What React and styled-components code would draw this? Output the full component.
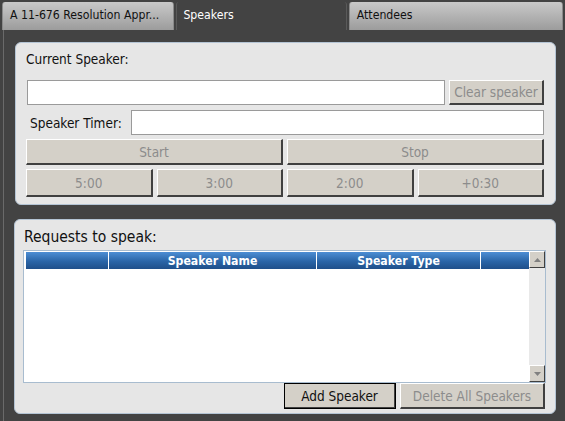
import React from 'react';
import styled, { createGlobalStyle } from 'styled-components';

const Global = createGlobalStyle`
  html, body { margin: 0; padding: 0; background: #434343; }
  body { font-family: "DejaVu Sans Condensed", "DejaVu Sans", sans-serif; font-size: 13.5px; }
`;

const Page = styled.div`
  width: 565px;
  height: 421px;
  background: #434343;
  overflow: hidden;
`;

const TabBar = styled.div`
  display: flex;
  height: 30px;
  padding: 2px 2px 0 2px;
  box-sizing: border-box;
  gap: 2px;
`;

const Tab = styled.div`
  width: ${p => p.w}px;
  box-sizing: border-box;
  padding: 6px 0 0 ${p => (p.active ? 6 : 7)}px;
  font-size: 12.2px;
  white-space: nowrap;
  color: ${p => (p.active ? '#ffffff' : '#111111')};
  background: ${p => (p.active ? '#434343' : 'linear-gradient(#c9c9c9, #9c9c9c)')};
  border-top-left-radius: 3px;
  border-top-right-radius: 3px;
  border-left: 1px solid ${p => (p.active ? '#5a5a5a' : '#8a8a8a')};
  border-right: 1px solid ${p => (p.active ? '#5a5a5a' : '#8a8a8a')};
`;

const Body = styled.div`
  margin-left: 3px;
  border-left: 1px solid #6a6a6a;
  height: 391px;
  padding: 12px 9px 0 10px;
  box-sizing: border-box;
  display: flex;
  flex-direction: column;
  gap: 14px;
`;

const Panel = styled.div`
  background: #e6e6e6;
  border: 1px solid #b4c4d4;
  border-radius: 6px;
  box-sizing: border-box;
  height: ${p => p.h}px;
  margin: ${p => p.m || '0'};
  padding: ${p => p.pad};
  display: flex;
  flex-direction: column;
`;

const Label = styled.div`
  color: #111;
  font-size: ${p => p.size || 13.5}px;
  white-space: nowrap;
  padding-left: ${p => p.indent || 0}px;
`;

const Row = styled.div`
  display: grid;
  grid-template-columns: ${p => p.cols};
  justify-content: ${p => p.justify || 'stretch'};
  gap: 4px;
  align-items: center;
  margin-top: ${p => p.mt || 0}px;
  margin-right: ${p => p.mr || 0}px;
  height: ${p => p.h}px;
`;

const Field = styled.div`
  height: 100%;
  margin-left: ${p => p.offset || 0}px;
  background: #fff;
  border: 1px solid #9a9a9a;
  box-sizing: border-box;
`;

const Button = styled.div`
  height: 100%;
  box-sizing: border-box;
  background: #d4d0c8;
  border-top: 1px solid #ffffff;
  border-left: 1px solid #ffffff;
  border-right: 2px solid #404040;
  border-bottom: 2px solid #404040;
  color: ${p => (p.enabled ? '#111' : '#8c8c8c')};
  display: flex;
  align-items: center;
  justify-content: center;
  font-size: 13.5px;
  white-space: nowrap;
  ${p => p.focused && 'outline: 1px solid #000; outline-offset: -1px;'}
`;

const Grid = styled.div`
  margin-top: 4px;
  height: 133px;
  border: 1px solid #a8bccf;
  background: #fff;
  display: flex;
  box-sizing: border-box;
  padding: 1px 0 1px 2px;
`;

const GridMain = styled.div`
  flex: 1;
`;

const Header = styled.div`
  display: grid;
  grid-template-columns: 82px 208px 164px 1fr;
  height: 17px;
  background: linear-gradient(#4d8ed4, #2a65a7 55%, #1f4f8a);
`;

const HeadCell = styled.div`
  color: #fff;
  font-size: 12.2px;
  font-weight: bold;
  display: flex;
  align-items: center;
  justify-content: center;
  border-left: ${p => (p.first ? 'none' : '1px solid #ffffff')};
  white-space: nowrap;
`;

const ScrollBar = styled.div`
  width: 16px;
  background: #e9e9e9;
  display: flex;
  flex-direction: column;
  justify-content: space-between;
  margin: -1px 0;
`;

const ScrollBtn = styled.div`
  height: 17px;
  box-sizing: border-box;
  background: #d4d0c8;
  border-top: 1px solid #fff;
  border-left: 1px solid #fff;
  border-right: 1px solid #404040;
  border-bottom: 1px solid #404040;
  display: flex;
  align-items: center;
  justify-content: center;
`;

const Arrow = ({ down }) => (
  <svg width="7" height="4" viewBox="0 0 7 4">
    <polygon points={down ? '0,0 7,0 3.5,4' : '0,4 7,4 3.5,0'} fill="#808080" />
  </svg>
);

export default function App() {
  return (
    <Page>
      <Global />
      <TabBar>
        <Tab w={173}>A 11-676 Resolution Appr...</Tab>
        <Tab w={171} active>Speakers</Tab>
        <Tab w={215}>Attendees</Tab>
      </TabBar>
      <Body>
        <Panel h={163} m="0 0 0 1px" pad="8px 11px 0 10px">
          <Label indent={-1}>Current Speaker:</Label>
          <Row cols="419px 1fr" h={25} mt={13}>
            <Field offset={1} />
            <Button>Clear speaker</Button>
          </Row>
          <Row cols="101px 1fr" h={25} mt={5}>
            <Label indent={4}>Speaker Timer:</Label>
            <Field />
          </Row>
          <Row cols="1fr 1fr" h={26} mt={4}>
            <Button>Start</Button>
            <Button>Stop</Button>
          </Row>
          <Row cols="1fr 1fr 1fr 1fr" h={28} mt={4}>
            <Button>5:00</Button>
            <Button>3:00</Button>
            <Button>2:00</Button>
            <Button>+0:30</Button>
          </Row>
        </Panel>
        <Panel h={195} pad="8px 9px 0 8px">
          <Label size={15.5} indent={1}>Requests to speak:</Label>
          <Grid>
            <GridMain>
              <Header>
                <HeadCell first />
                <HeadCell>Speaker Name</HeadCell>
                <HeadCell>Speaker Type</HeadCell>
                <HeadCell />
              </Header>
            </GridMain>
            <ScrollBar>
              <ScrollBtn><Arrow /></ScrollBtn>
              <ScrollBtn><Arrow down /></ScrollBtn>
            </ScrollBar>
          </Grid>
          <Row cols="112px 145px" h={26} mr={1} justify="end">
            <Button enabled focused>Add Speaker</Button>
            <Button>Delete All Speakers</Button>
          </Row>
        </Panel>
      </Body>
    </Page>
  );
}
